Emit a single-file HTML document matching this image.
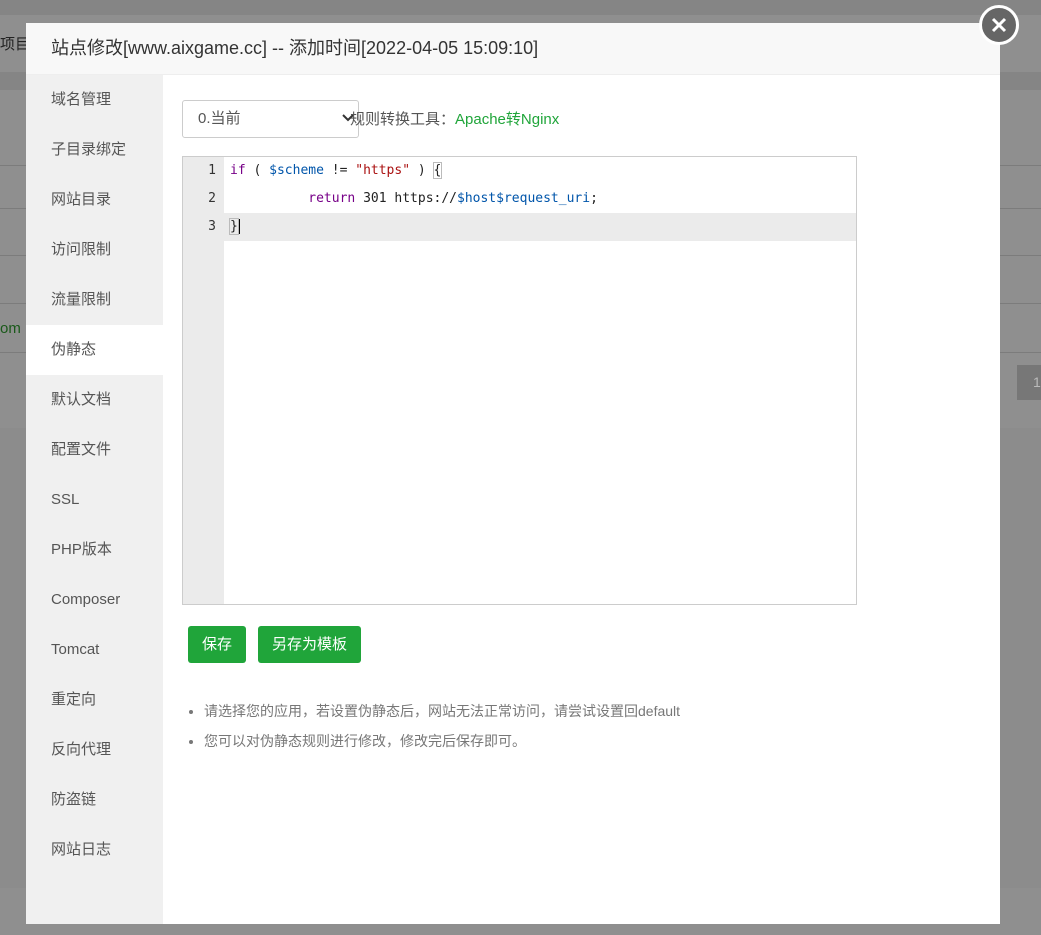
<!DOCTYPE html>
<html><head><meta charset="utf-8"><style>
body{margin:0;width:1041px;height:935px;overflow:hidden;background:#8f8f8f;font-family:"Liberation Sans","Noto Sans CJK SC",sans-serif;position:relative}
.bgline{position:absolute;left:0;right:0;height:1px;background:#7c7c7c}
.modal{position:absolute;left:26px;top:23px;width:974px;height:901px;background:#fff}
.hd{height:51px;background:#f8f8f8;border-bottom:1px solid #eee;font-size:18px;color:#333;line-height:51px;padding-left:25px}
.side{position:absolute;left:0;top:52px;width:137px;bottom:0;background:#f0f0f0}
.side div{height:50px;line-height:50px;padding-left:25px;font-size:15px;color:#555}
.side div.on{background:#fff}
.sel{position:absolute;left:156px;top:77px;width:160px;height:36px;border:1px solid #ccc;border-radius:3px;font-size:15px;color:#555;line-height:36px;padding-left:15px;box-sizing:content-box}
.sel svg{position:absolute;right:4px;top:13px}
.tool{position:absolute;left:324px;top:77px;line-height:40px;font-size:15px;color:#555}
.tool span{color:#20a53a}
.ed{position:absolute;left:156px;top:133px;width:673px;height:447px;border:1px solid #ccc;font-family:"DejaVu Sans Mono","Liberation Mono",monospace;font-size:13px}
.gut{position:absolute;left:0;top:0;width:41px;height:100%;background:#ebebeb}
.ln{position:absolute;left:0;height:28px;line-height:28px;width:100%}
.ln .n{position:absolute;left:0;width:33px;text-align:right;color:#333}
.ln .c{position:absolute;left:47px;color:#222;white-space:pre}
.kw{color:#708}.var{color:#05a}.str{color:#a11}
.btn{position:absolute;top:603px;height:37px;line-height:37px;background:#20a53a;color:#fff;border-radius:3px;font-size:15px;text-align:center}
ul{position:absolute;left:156px;top:673px;margin:0;padding-left:22px;font-size:14px;color:#777;line-height:30px}
.close{position:absolute;left:979px;top:5px;width:34px;height:34px;border-radius:50%;background:#666;border:3px solid #fff;box-sizing:content-box}
</style></head><body>
<div style="position:absolute;left:0;top:0;right:0;height:15px;background:#858585"></div>
<div style="position:absolute;left:0;top:72px;right:0;height:18px;background:#858585"></div>
<div class="bgline" style="top:165px"></div><div class="bgline" style="top:208px"></div><div class="bgline" style="top:255px"></div><div class="bgline" style="top:303px"></div><div class="bgline" style="top:352px"></div>
<div style="position:absolute;left:0;top:428px;right:0;height:460px;background:#8c8c8c"></div>
<div style="position:absolute;left:1017px;top:365px;width:24px;height:35px;background:#777;color:#bbb;font-size:14px;line-height:35px;padding-left:16px">1</div>
<div style="position:absolute;left:0;top:33px;font-size:15px;color:#222">项目</div>
<div style="position:absolute;left:0;top:320px;font-size:15px;color:#1a5a1a">om</div>
<div class="modal">
<div class="hd">站点修改[www.aixgame.cc] -- 添加时间[2022-04-05 15:09:10]</div>
<div class="side">
<div>域名管理</div><div>子目录绑定</div><div>网站目录</div><div>访问限制</div><div>流量限制</div><div class="on">伪静态</div><div>默认文档</div><div>配置文件</div><div>SSL</div><div>PHP版本</div><div>Composer</div><div>Tomcat</div><div>重定向</div><div>反向代理</div><div>防盗链</div><div>网站日志</div>
</div>
<div class="sel">0.当前<svg width="12" height="8" viewBox="0 0 12 8"><path d="M1 1l5 5 5-5" stroke="#333" stroke-width="2" fill="none"/></svg></div>
<div class="tool">规则转换工具：<span>Apache转Nginx</span></div>
<div class="ed">
<div class="gut"></div>
<div class="ln" style="top:0"><span class="n">1</span><span class="c"><span class="kw">if</span> ( <span class="var">$scheme</span> != <span class="str">"https"</span> ) <span style="outline:1px solid #bbb">{</span></span></div>
<div class="ln" style="top:28px"><span class="n">2</span><span class="c">          <span class="kw">return</span> 301 https://<span class="var">$host$request_uri</span>;</span></div>
<div class="ln" style="top:56px;background:#ebebeb"><span class="n">3</span><span class="c"><span style="outline:1px solid #bbb">}</span><span style="border-left:2px solid #000"></span></span></div>
</div>
<div class="btn" style="left:162px;width:58px">保存</div>
<div class="btn" style="left:232px;width:103px">另存为模板</div>
<ul><li>请选择您的应用，若设置伪静态后，网站无法正常访问，请尝试设置回default</li><li>您可以对伪静态规则进行修改，修改完后保存即可。</li></ul>
</div>
<div class="close"><svg width="34" height="34" viewBox="0 0 34 34"><path d="M11 11l12 12M23 11l-12 12" stroke="#fff" stroke-width="3"/></svg></div>
</body></html>
